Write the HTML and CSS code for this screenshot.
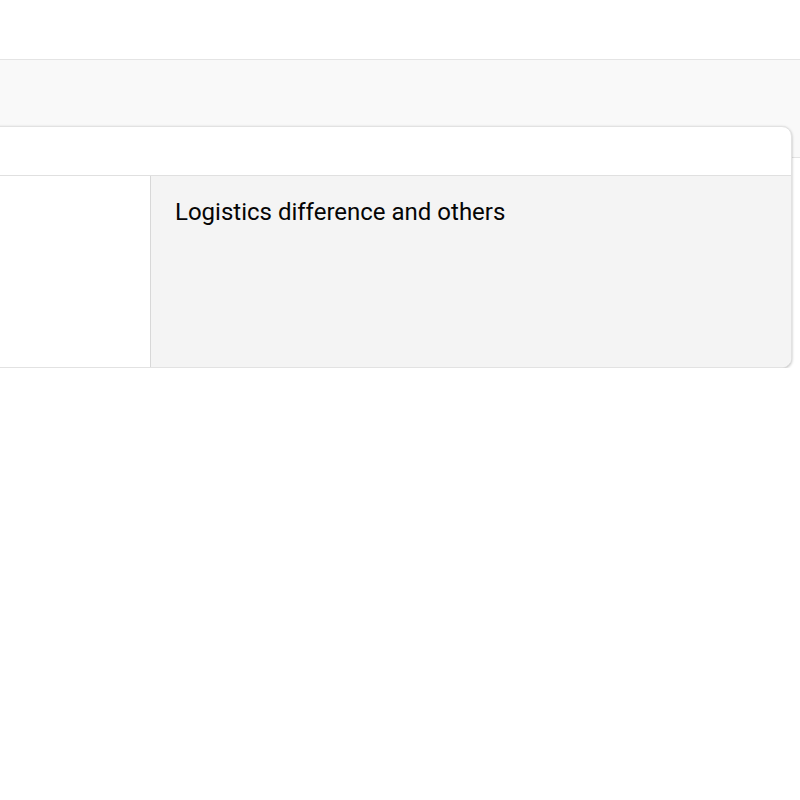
FILE: index.html
```html
<!DOCTYPE html>
<html lang="en">
<head>
<meta charset="utf-8">
<title>Details</title>
<link rel="stylesheet" href="styles.css">
</head>
<body>
  <header class="topbar"></header>
  <div class="band"></div>
  <main class="content">
    <section class="card">
      <div class="card-head"></div>
      <div class="card-body">
        <div class="cell cell-label"></div>
        <div class="cell cell-value">Logistics difference and others</div>
      </div>
    </section>
  </main>
</body>
</html>
```

FILE: styles.css
```css
html, body {
  margin: 0;
  padding: 0;
  background: #ffffff;
  font-family: Roboto, "Liberation Sans", sans-serif;
  color: #050505;
  overflow: hidden;
}

.topbar {
  height: 59px;
  border-bottom: 1px solid #e4e4e4;
  background: #ffffff;
}

.band {
  height: 97px;
  background: #f9f9f9;
  border-bottom: 1px solid #e4e4e4;
}

.content {
  margin-top: -32px;
  padding-right: 8px;
}

.card {
  margin-left: -40px;
  background: #ffffff;
  border: 1px solid #e2e2e2;
  border-radius: 0 10px 10px 0;
  box-shadow: 0 1px 3px rgba(0, 0, 0, 0.28);
  overflow: hidden;
}

.card-head {
  height: 48px;
  border-bottom: 1px solid #e0e0e0;
}

.card-body {
  display: flex;
  height: 191px;
}

.cell-label {
  width: 189px;
  border-right: 1px solid #d8d8d8;
  background: #ffffff;
}

.cell-value {
  flex: 1;
  background: #f4f4f4;
  padding: 22px 24px 24px;
  font-size: 24px;
  line-height: 28px;
}
```
